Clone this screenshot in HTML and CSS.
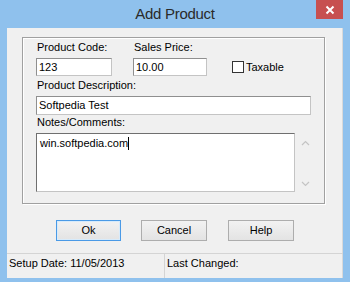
FILE: index.html
```html
<!DOCTYPE html>
<html>
<head>
<meta charset="utf-8">
<link rel="stylesheet" href="styles.css">
</head>
<body>
<div class="window">
  <div class="titlebar">
    <span class="title">Add Product</span>
    <div class="close">
      <svg width="10" height="10" viewBox="0 0 10 10"><path d="M1.5 1.5 L8.5 8.5 M8.5 1.5 L1.5 8.5" stroke="#fff" stroke-width="2" fill="none"/></svg>
    </div>
  </div>
  <div class="client">
    <div class="group">
      <div class="row1">
        <div class="field f-code">
          <span class="label">Product Code:</span>
          <div class="input w-code">123</div>
        </div>
        <div class="field f-price">
          <span class="label">Sales Price:</span>
          <div class="input w-price">10.00</div>
        </div>
        <div class="check">
          <span class="box"></span>
          <span class="check-label">Taxable</span>
        </div>
      </div>
      <div class="field f-desc">
        <span class="label">Product Description:</span>
        <div class="input w-desc">Softpedia Test</div>
      </div>
      <div class="field f-notes">
        <span class="label">Notes/Comments:</span>
        <div class="notes-row">
          <div class="notes">win.softpedia.com<span class="caret"></span></div>
          <div class="scroll">
            <svg width="9" height="6" viewBox="0 0 9 6"><path d="M1 5 L4.5 1.5 L8 5" stroke="#c4c4c4" stroke-width="1.2" fill="none"/></svg>
            <svg width="9" height="6" viewBox="0 0 9 6"><path d="M1 1 L4.5 4.5 L8 1" stroke="#c4c4c4" stroke-width="1.2" fill="none"/></svg>
          </div>
        </div>
      </div>
    </div>
    <div class="buttons">
      <div class="btn default w-ok">Ok</div>
      <div class="btn w-cancel">Cancel</div>
      <div class="btn w-help">Help</div>
    </div>
    <div class="status">
      <div class="cell cell-setup">Setup Date: 11/05/2013</div>
      <div class="cell cell-last">Last Changed:</div>
    </div>
  </div>
</div>
</body>
</html>
```

FILE: styles.css
```css
html, body {
  margin: 0;
  padding: 0;
}
body {
  width: 350px;
  height: 282px;
  overflow: hidden;
  background: #8fc1ed;
  font-family: "Liberation Sans", Arial, sans-serif;
  font-size: 11px;
  color: #000;
}
.window {
  width: 350px;
  height: 282px;
  display: flex;
  flex-direction: column;
}
.titlebar {
  height: 28px;
  display: grid;
  grid-template-columns: 1fr auto 1fr;
  align-items: start;
}
.title {
  grid-column: 2;
  font-family: "Liberation Sans", Arial, sans-serif;
  font-size: 15px;
  line-height: 28px;
  color: #2a2a2a;
  letter-spacing: -0.3px;
}
.close {
  grid-column: 3;
  justify-self: end;
  margin-right: 7px;
  width: 27px;
  height: 19px;
  background: #c75050;
  display: flex;
  align-items: center;
  justify-content: center;
}
.close svg {
  display: block;
}
.client {
  margin: 0 7px;
  height: 250px;
  background: #f0f0f0;
  display: flex;
  flex-direction: column;
  box-shadow: inset -1px 0 0 #d9d9d9;
}
.group {
  margin: 9px 0 0 15px;
  width: 301px;
  height: 165px;
  border: 1px solid #a0a0a0;
  box-shadow: inset 1px 1px 0 #fff, 1px 1px 0 #fff;
  padding: 3px 0 0 13px;
  box-sizing: content-box;
  display: flex;
  flex-direction: column;
  box-sizing: border-box;
  width: 303px;
  height: 167px;
}
.row1 {
  display: flex;
  align-items: flex-end;
}
.field {
  display: flex;
  flex-direction: column;
  gap: 4px;
}
.label {
  line-height: 13px;
  padding-left: 1px;
  white-space: nowrap;
}
.input {
  box-sizing: border-box;
  height: 18px;
  line-height: 16px;
  border: 1px solid #abadb3;
  border-color: #8f8f8f #c4c4c4 #c4c4c4 #8f8f8f;
  background: #fff;
  padding-left: 2px;
  white-space: nowrap;
}
.w-code { width: 76px; }
.f-price { margin-left: 21px; }
.w-price { width: 74px; }
.check {
  margin-left: 25px;
  height: 18px;
  display: flex;
  align-items: center;
  gap: 2px;
}
.box {
  box-sizing: border-box;
  width: 12px;
  height: 12px;
  border: 1px solid #333;
  background: #fff;
}
.check-label {
  line-height: 13px;
}
.f-desc {
  margin-top: 3px;
}
.w-desc {
  width: 275px;
  height: 19px;
  line-height: 17px;
}
.f-notes {
  margin-top: 1px;
}
.notes-row {
  display: flex;
}
.notes {
  box-sizing: border-box;
  width: 259px;
  height: 59px;
  border: 1px solid;
  border-color: #6f6f6f #c4c4c4 #c4c4c4 #6f6f6f;
  background: #fff;
  padding: 3px 0 0 3px;
  line-height: 13px;
  white-space: nowrap;
}
.caret {
  display: inline-block;
  width: 1px;
  height: 13px;
  background: #000;
  vertical-align: top;
}
.scroll {
  width: 17px;
  height: 59px;
  display: flex;
  flex-direction: column;
  justify-content: space-between;
  align-items: center;
  padding: 7px 0 5px 4px;
  box-sizing: border-box;
}
.scroll svg {
  display: block;
}
.buttons {
  margin: 16px 0 0 49px;
  display: flex;
}
.btn {
  box-sizing: border-box;
  height: 21px;
  border: 1px solid #adadad;
  background: linear-gradient(#f2f2f2, #e3e3e3);
  display: flex;
  align-items: center;
  justify-content: center;
  line-height: 13px;
}
.btn.default {
  border-color: #4a9ae6;
  box-shadow: inset 0 0 0 1px #d7ebfb;
}
.w-ok { width: 65px; }
.w-cancel { width: 66px; margin-left: 20px; }
.w-help { width: 66px; margin-left: 21px; }
.status {
  margin-top: 12px;
  flex: 1;
  border-top: 1px solid #d4d4d4;
  display: flex;
}
.cell {
  padding-top: 3px;
  line-height: 13px;
  white-space: nowrap;
}
.cell-setup {
  width: 158px;
  padding-left: 2px;
  box-sizing: border-box;
  border-right: 1px solid #d4d4d4;
}
.cell-last {
  padding-left: 2px;
}
```
